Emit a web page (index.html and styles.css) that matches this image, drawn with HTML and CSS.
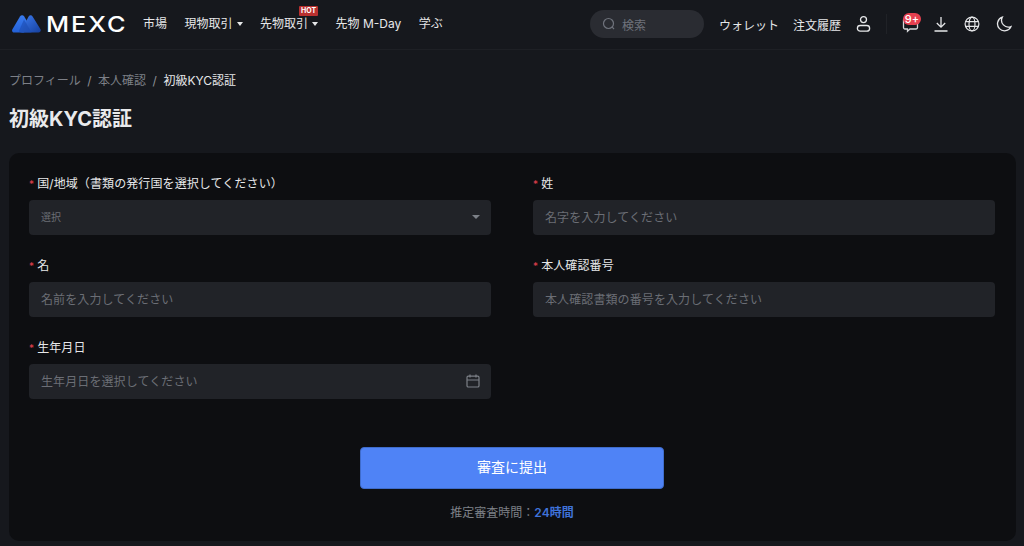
FILE: index.html
```html
<!DOCTYPE html>
<html lang="ja">
<head>
<meta charset="utf-8">
<title>初級KYC認証</title>
<link rel="stylesheet" href="styles.css">
</head>
<body>
<header class="topbar">
  <div class="brand">
    <svg class="brand-mark" width="29" height="18" viewBox="0 0 29 18">
      <defs>
        <linearGradient id="lg1" x1="0" y1="0" x2="0" y2="1"><stop offset="0" stop-color="#3a7cf0"/><stop offset="1" stop-color="#2360d6"/></linearGradient>
        <linearGradient id="lg2" x1="0" y1="0" x2="1" y2="1"><stop offset="0" stop-color="#3d7cf0"/><stop offset="1" stop-color="#16409e"/></linearGradient>
      </defs>
      <path d="M8 1.500c1-1.600 3.200-1.600 4.200 0L17 9.500 12 17.500H2.200C.6 17.500-.5 15.800.3 14.400Z" fill="url(#lg1)"/>
      <path d="M16.600 1.400c1-1.500 3-1.500 4 0l7.900 12.800c.8 1.500-.2 3.300-1.900 3.300H10.500c-1.300 0-1.900-1-1.300-2.100Z" fill="url(#lg2)"/>
      <path d="M12 4.500 19.500 17.500H8.600c-1.200 0-2-1.200-1.400-2.300Z" fill="#1d4eb6" opacity=".65"/>
    </svg>
    <span class="brand-name">MEXC</span>
  </div>
  <nav class="nav">
    <a class="nav-item">市場</a>
    <a class="nav-item">現物取引<i class="caret"></i></a>
    <a class="nav-item nav-hot">先物取引<i class="caret"></i><b class="hot">HOT</b></a>
    <a class="nav-item">先物 M-Day</a>
    <a class="nav-item">学ぶ</a>
  </nav>
  <div class="top-right">
    <div class="search">
      <svg width="14" height="14" viewBox="0 0 14 14" fill="none" stroke="#6f737c" stroke-width="1.2"><circle cx="6.500" cy="6.500" r="5"/><path d="M10.200 10.200 12 12"/></svg>
      <span>検索</span>
    </div>
    <a class="top-link">ウォレット</a>
    <a class="top-link">注文履歴</a>
    <svg class="ico ico-user" width="16" height="18" viewBox="0 0 16 18" fill="none" stroke="#e6e7e9" stroke-width="1.3"><circle cx="7.500" cy="4.600" r="3"/><rect x="1.400" y="10.500" width="12.200" height="5.700" rx="2.800"/></svg>
    <span class="divider"></span>
    <div class="msg">
      <svg width="17" height="17" viewBox="0 0 17 17" fill="none" stroke="#d5d6d9" stroke-width="1.3"><path d="M3 2.500h11a1.500 1.500 0 0 1 1.500 1.500v7.500a1.500 1.500 0 0 1-1.500 1.500H8l-2.500 2.200V13H3a1.500 1.500 0 0 1-1.500-1.500V4A1.500 1.500 0 0 1 3 2.500Z"/></svg>
      <b class="badge">9+</b>
    </div>
    <svg class="ico ico-down" width="14" height="16" viewBox="0 0 14 16" fill="none" stroke="#e6e7e9" stroke-width="1.3"><path d="M7 1v10M2.800 7 7 11.200 11.200 7M.5 15h13"/></svg>
    <svg class="ico ico-globe" width="16" height="16" viewBox="0 0 16 16" fill="none" stroke="#e6e7e9" stroke-width="1.200"><circle cx="8" cy="8" r="6.900"/><ellipse cx="8" cy="8" rx="3" ry="6.900"/><path d="M1.500 5.700h13M1.500 10.300h13"/></svg>
    <svg class="ico ico-moon" width="16" height="16" viewBox="0 0 16 16" fill="none" stroke="#e6e7e9" stroke-width="1.300"><path d="M6.300 1.200a7 7 0 1 0 8.700 9.300A6.800 6.800 0 0 1 6.300 1.200Z"/></svg>
  </div>
</header>

<main class="page">
  <nav class="crumbs">
    <span>プロフィール</span><span class="sep">/</span><span>本人確認</span><span class="sep">/</span><span class="current">初級KYC認証</span>
  </nav>
  <h1 class="title">初級KYC認証</h1>

  <section class="card">
    <div class="grid">
      <div class="field">
        <label class="label">国/地域（書類の発行国を選択してください）</label>
        <div class="control select"><span class="small">選択</span><i class="select-caret"></i></div>
      </div>
      <div class="field">
        <label class="label">姓</label>
        <div class="control"><span>名字を入力してください</span></div>
      </div>
      <div class="field">
        <label class="label">名</label>
        <div class="control"><span>名前を入力してください</span></div>
      </div>
      <div class="field">
        <label class="label">本人確認番号</label>
        <div class="control"><span>本人確認書類の番号を入力してください</span></div>
      </div>
      <div class="field">
        <label class="label">生年月日</label>
        <div class="control select"><span>生年月日を選択してください</span>
          <svg width="14" height="14" viewBox="0 0 14 14" fill="none" stroke="#7c8087" stroke-width="1.200"><rect x="1" y="2.200" width="12" height="10.800" rx="1.300"/><path d="M1 6h12M4 .5v3M10 .5v3"/></svg>
        </div>
      </div>
    </div>
    <div class="actions">
      <button class="submit" type="button">審査に提出</button>
      <p class="eta">推定審査時間：<strong>24時間</strong></p>
    </div>
  </section>
</main>
</body>
</html>
```

FILE: styles.css
```css
* { box-sizing: border-box; }
html, body { margin: 0; height: 100%; }
body {
  background: #16181d;
  color: #e6e7e9;
  font-family: Inter, "Noto Sans CJK JP", sans-serif;
  font-size: 12px;
  overflow: hidden;
}
.topbar {
  height: 50px;
  display: flex;
  align-items: center;
  padding: 0 12px 1px;
  border-bottom: 1px solid #1e2025;
}
.brand { display: flex; align-items: center; gap: 5px; width: 131px; flex: none; }
.brand-mark { flex: none; }
.brand-name {
  font-family: Inter, sans-serif;
  font-weight: 500;
  font-size: 22px;
  line-height: 22px;
  letter-spacing: 1.700px;
  color: #fff;
  transform: scaleX(1.15);
  transform-origin: left center;
}
.nav { display: flex; align-items: center; gap: 17.500px; }
.nav-item { position: relative; display: flex; align-items: center; color: #e6e7e9; font-size: 12px; line-height: 16px; white-space: nowrap; }
.caret {
  width: 0; height: 0; margin-left: 4px;
  border: 3.500px solid transparent;
  border-top: 4px solid #e6e7e9;
  border-bottom: 0;
}
.hot {
  position: absolute;
  top: -10px; left: 39px;
  width: 19px; height: 10px;
  background: #b8302f;
  border-radius: 1px;
  color: #fff;
  font-size: 7px;
  font-weight: 700;
  line-height: 10px;
  text-align: center;
}
.top-right { margin-left: auto; display: flex; align-items: center; }
.search {
  width: 114px; height: 28px;
  margin-right: 1px;
  border-radius: 14px;
  background: #2a2c32;
  display: flex; align-items: center; gap: 6px;
  padding: 0 12px;
  color: #6f737c;
}
.top-link { margin-left: 14px; white-space: nowrap; color: #e6e7e9; }
.ico { flex: none; }
.ico-user { margin-left: 15px; }
.divider { width: 1px; height: 20px; background: #202227; margin: 0 15px 0 14px; }
.msg { position: relative; width: 17px; height: 17px; }
.badge {
  position: absolute;
  top: -3px; left: 1px;
  width: 18px; height: 12px;
  border-radius: 6px;
  background: #e5404f;
  color: #fff;
  font-size: 11px;
  font-weight: 500;
  line-height: 12px;
  text-align: center;
}
.ico-down { margin-left: 15px; }
.ico-globe { margin-left: 16px; }
.ico-moon { margin-left: 16px; margin-right: 0; }
.page { padding: 23px 8px 5px 9px; }
.crumbs { display: flex; gap: 6.500px; height: 16px; line-height: 16px; color: #7d8087; }
.sep { color: #8d9096; }
.current { color: #e6e7e9; }
.title { margin: 16px 0 0; font-size: 20px; line-height: 28px; font-weight: 700; color: #e9eaec; }
.card {
  margin-top: 20px;
  height: 388px;
  padding: 22px 21px 0 20px;
  background: #0d0e11;
  border-radius: 10px;
}
.grid { display: grid; grid-template-columns: 462px 462px; column-gap: 42px; row-gap: 22px; }
.label { display: block; height: 25px; padding-top: 1px; line-height: 16px; color: #e6e7e9; letter-spacing: .1px; }
.label::before { content: "*"; color: #e5404f; margin-right: 3px; font-size: 10px; }
.control {
  height: 35px;
  background: #212328;
  border-radius: 4px;
  padding: 0 12px 2px;
  display: flex; align-items: center;
  color: #6b6e75;
  font-size: 12px;
  letter-spacing: .1px;
}
.select { justify-content: space-between; padding-right: 11px; }
.small { font-size: 10px; }
.select-caret {
  width: 0; height: 0; margin-right: 0;
  border: 4px solid transparent;
  border-top: 4px solid #7c8087;
  border-bottom: 0;
}
.actions { display: flex; flex-direction: column; align-items: center; margin-top: 48px; }
.submit {
  width: 304px; height: 42px;
  border: 1px solid #3f6ccb;
  border-radius: 4px;
  background: #4f83f6;
  color: #fff;
  font: inherit;
  font-size: 14px;
  padding: 0 0 4px;
}
.eta { margin: 16px 0 0; line-height: 16px; color: #7d8087; }
.eta strong { color: #3f72d8; font-weight: 600; }
```
